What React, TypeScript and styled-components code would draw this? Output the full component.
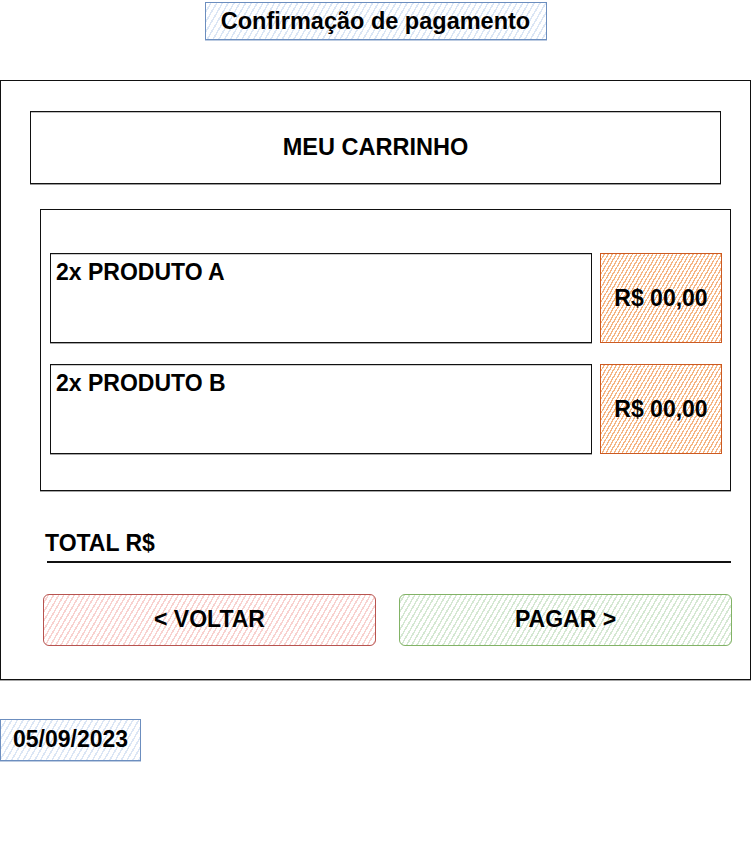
import React from "react";
import styled, { createGlobalStyle, css } from "styled-components";

const GlobalStyle = createGlobalStyle`
  html, body { margin: 0; padding: 0; background: #ffffff; }
  body { font-family: "Liberation Sans", Arial, Helvetica, sans-serif; color: #000; }
  * { box-sizing: border-box; }
`;

const hatch = (line: string, gap = 3, width = 1.5) => css`
  background: repeating-linear-gradient(
    120deg,
    #ffffff 0 ${gap}px,
    ${line} ${gap}px ${gap + width}px
  );
`;

const Page = styled.div`
  width: 751px;
  min-height: 850px;
  padding-top: 2px;
  display: flex;
  flex-direction: column;
`;

const TitleBox = styled.div`
  align-self: center;
  width: 342px;
  height: 38px;
  border: 1px solid #6c8ebf;
  box-shadow: 0 1px 0 rgba(108, 142, 191, 0.45);
  ${hatch("#dbe6f5", 3.5, 1.5)}
  display: flex;
  align-items: center;
  justify-content: center;
  font-weight: 700;
  font-size: 23.5px;
`;

const Frame = styled.section`
  margin-top: 40px;
  width: 751px;
  border: 1px solid #111;
  box-shadow: 0 1px 0 rgba(0, 0, 0, 0.35);
  padding: 30px 0 33px;
  display: flex;
  flex-direction: column;
`;

const Header = styled.div`
  margin: 0 29px;
  height: 73px;
  border: 1px solid #111;
  box-shadow: 0 1px 0 rgba(0, 0, 0, 0.4), inset 0 1px 0 rgba(0, 0, 0, 0.25);
  display: flex;
  align-items: center;
  justify-content: center;
  font-weight: 700;
  font-size: 23.5px;
`;

const Cart = styled.div`
  margin: 25px 19px 0 39px;
  border: 1px solid #111;
  box-shadow: 0 1px 0 rgba(0, 0, 0, 0.35);
  padding: 43px 8px 36px 9px;
  display: flex;
  flex-direction: column;
  gap: 21px;
`;

const ItemRow = styled.div`
  display: flex;
  gap: 8px;
  height: 90px;
`;

const ItemName = styled.div`
  flex: 1;
  border: 1px solid #111;
  box-shadow: 0 1px 0 rgba(0, 0, 0, 0.35), inset 0 1px 0 rgba(0, 0, 0, 0.2);
  padding: 5px 0 0 5px;
  font-weight: 700;
  font-size: 23px;
  line-height: 26px;
`;

const Price = styled.div`
  width: 122px;
  border: 1px solid #cc5a22;
  ${hatch("#f5b583", 2.2, 1.3)}
  display: flex;
  align-items: center;
  justify-content: center;
  font-weight: 700;
  font-size: 23px;
`;

const TotalLabel = styled.div`
  margin: 39px 0 0 44px;
  font-weight: 700;
  font-size: 23px;
  line-height: 26px;
`;

const Rule = styled.div`
  margin: 5px 19px 0 46px;
  height: 1.5px;
  background: #111;
`;

const Actions = styled.div`
  margin: 31px 18px 0 42px;
  display: flex;
  gap: 23px;
`;

const ActionButton = styled.button<{ $tone: "back" | "pay" }>`
  flex: 1;
  height: 52px;
  border-radius: 6px;
  border: 1.5px solid ${(p) => (p.$tone === "back" ? "#b85450" : "#82b366")};
  ${(p) => (p.$tone === "back" ? hatch("#f8d2d0", 3, 1.5) : hatch("#d5e8d3", 3, 1.5))}
  font-family: "Liberation Sans", Arial, sans-serif;
  font-weight: 700;
  font-size: 23px;
  color: #000;
  padding: 0;
  cursor: pointer;
`;

const DateBox = styled.div`
  margin-top: 39px;
  width: 141px;
  height: 42px;
  border: 1px solid #6c8ebf;
  box-shadow: 0 1px 0 rgba(108, 142, 191, 0.45);
  ${hatch("#dbe6f5", 3.5, 1.5)}
  display: flex;
  align-items: center;
  justify-content: center;
  font-weight: 700;
  font-size: 23px;
`;

const items = [
  { name: "2x PRODUTO A", price: "R$ 00,00" },
  { name: "2x PRODUTO B", price: "R$ 00,00" },
];

export default function App() {
  return (
    <>
      <GlobalStyle />
      <Page>
        <TitleBox>Confirmação de pagamento</TitleBox>
        <Frame>
          <Header>MEU CARRINHO</Header>
          <Cart>
            {items.map((it) => (
              <ItemRow key={it.name}>
                <ItemName>{it.name}</ItemName>
                <Price>{it.price}</Price>
              </ItemRow>
            ))}
          </Cart>
          <TotalLabel>TOTAL R$</TotalLabel>
          <Rule />
          <Actions>
            <ActionButton $tone="back">&lt; VOLTAR</ActionButton>
            <ActionButton $tone="pay">PAGAR &gt;</ActionButton>
          </Actions>
        </Frame>
        <DateBox>05/09/2023</DateBox>
      </Page>
    </>
  );
}
